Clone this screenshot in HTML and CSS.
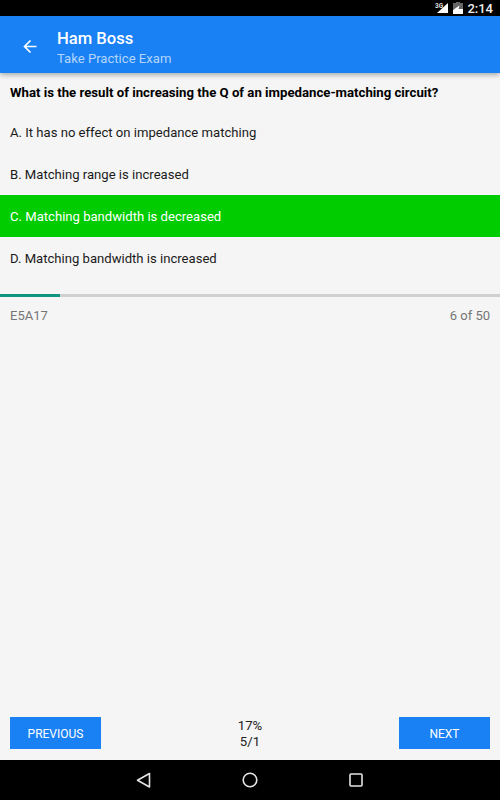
FILE: index.html
```html
<!DOCTYPE html>
<html lang="en">
<head>
    <meta charset="UTF-8">
    <meta name="viewport" content="width=device-width, initial-scale=1.0">
    <title>Ham Boss</title>
    <link rel="stylesheet" href="styles.css">
</head>
<body>
    <div class="status-bar">
        <svg class="signal" width="14" height="12" viewBox="0 0 14 12">
            <path d="M13 1V11H2Z" fill="#fff"/>
            <text x="0" y="5.5" class="net">3G</text>
        </svg>
        <svg class="battery" width="10" height="12" viewBox="0 0 10 12">
            <path d="M3 0H7V1H10V12H0V1H3Z" fill="#666"/>
            <path d="M0 8L6.5 3.5L5.5 7H10V12H0Z" fill="#fff"/>
        </svg>
        <span class="clock">2:14</span>
    </div>

    <header class="app-bar">
        <svg class="back" width="16" height="16" viewBox="0 0 16 16">
            <path d="M14.5 8.5H3M8.5 2.5L2.5 8.5L8.5 14.5" fill="none" stroke="#fff" stroke-width="1.7"/>
        </svg>
        <div class="titles">
            <div class="title">Ham Boss</div>
            <div class="subtitle">Take Practice Exam</div>
        </div>
    </header>

    <main class="content">
        <p class="question">What is the result of increasing the Q of an impedance-matching circuit?</p>
        <div class="answer">A. It has no effect on impedance matching</div>
        <div class="answer">B. Matching range is increased</div>
        <div class="answer correct">C. Matching bandwidth is decreased</div>
        <div class="answer">D. Matching bandwidth is increased</div>

        <div class="progress"><div class="progress-fill"></div></div>
        <div class="meta">
            <span>E5A17</span>
            <span>6 of 50</span>
        </div>

        <div class="footer">
            <button class="btn">PREVIOUS</button>
            <div class="score">17%<br>5/1</div>
            <button class="btn">NEXT</button>
        </div>
    </main>

    <nav class="nav-bar">
        <svg width="16" height="16" viewBox="0 0 16 16">
            <path d="M13.5 1.5V15L1.5 8.2Z" fill="none" stroke="#e4e4e4" stroke-width="1.6" stroke-linejoin="round"/>
        </svg>
        <svg width="16" height="16" viewBox="0 0 16 16">
            <circle cx="8" cy="8" r="6.8" fill="none" stroke="#e4e4e4" stroke-width="1.6"/>
        </svg>
        <svg width="16" height="16" viewBox="0 0 16 16">
            <rect x="2" y="2" width="12" height="12" rx="1" fill="none" stroke="#e4e4e4" stroke-width="1.6"/>
        </svg>
    </nav>
</body>
</html>
```

FILE: styles.css
```css
* {
    box-sizing: border-box;
}

body {
    margin: 0;
    height: 800px;
    display: flex;
    flex-direction: column;
    font-family: Roboto, sans-serif;
    background: #f5f5f5;
    color: #1a1a1a;
    overflow: hidden;
}

.status-bar {
    height: 16px;
    background: #000;
    display: flex;
    align-items: center;
    justify-content: flex-end;
    padding-right: 7px;
    color: #eee;
}

.signal {
    margin-right: 4px;
}

.net {
    font-family: Roboto, sans-serif;
    font-size: 6.5px;
    font-weight: 700;
    fill: #ddd;
}

.battery {
    margin-right: 4px;
}

.clock {
    font-size: 13px;
    font-weight: 500;
}

.app-bar {
    height: 57px;
    background: #1a81f5;
    display: flex;
    align-items: center;
    padding: 3px 0 0 22px;
    box-shadow: 0 2px 5px rgba(0,0,0,0.3);
    position: relative;
}

.titles {
    margin-left: 19px;
    padding-top: 6px;
}

.title {
    color: #fff;
    font-size: 16.6px;
    font-weight: 500;
    line-height: 20px;
}

.subtitle {
    color: #b4d5fb;
    font-size: 13.1px;
    line-height: 20px;
}

.content {
    flex: 1;
    display: flex;
    flex-direction: column;
}

.question {
    margin: 0;
    padding: 12px 10px 0;
    font-size: 13.2px;
    font-weight: 700;
    line-height: 16px;
    height: 38px;
    color: #000;
}

.answer {
    height: 42px;
    padding: 0 10px;
    display: flex;
    align-items: center;
    font-size: 13.1px;
}

.correct {
    background: #00cc00;
    color: #fff;
}

.progress {
    height: 3px;
    margin-top: 15px;
    background: #d0d0d0;
}

.progress-fill {
    width: 60px;
    height: 100%;
    background: #0f9580;
}

.meta {
    display: flex;
    justify-content: space-between;
    padding: 11px 10px 0;
    font-size: 13px;
    line-height: 16px;
    color: #757575;
}

.footer {
    margin-top: auto;
    height: 43px;
    padding: 0 10px;
    display: flex;
    justify-content: space-between;
    align-items: flex-start;
}

.btn {
    width: 91px;
    height: 32px;
    padding: 1px 0 0;
    border: 0;
    background: #1a81f5;
    color: #fff;
    font-family: Roboto, sans-serif;
    font-size: 12px;
}

.score {
    padding-top: 1px;
    font-size: 13.2px;
    line-height: 16px;
    text-align: center;
    color: #222;
}

.nav-bar {
    height: 40px;
    background: #000;
    display: flex;
    align-items: center;
    justify-content: space-between;
    padding: 0 136px;
}
```
